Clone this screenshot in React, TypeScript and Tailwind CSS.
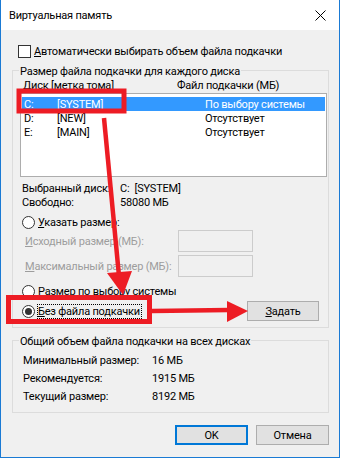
import React from 'react';

function Radio({ checked = false }: { checked?: boolean }) {
  return (
    <span className="w-[13px] h-[13px] rounded-full border border-[#333333] bg-white flex items-center justify-center shrink-0">
      {checked && <span className="w-[7px] h-[7px] rounded-full bg-[#333333]" />}
    </span>
  );
}

function Button({ children, isDefault = false, w = 'w-[72px]' }: { children: React.ReactNode; isDefault?: boolean; w?: string }) {
  return (
    <div
      className={
        'h-[20px] flex items-center justify-center bg-[#e1e1e1] ' +
        w +
        ' ' +
        (isDefault ? 'border-2 border-[#0078d7]' : 'border border-[#adadad]')
      }
    >
      {children}
    </div>
  );
}

const disks = [
  { letter: 'C:', label: '[SYSTEM]', file: 'По выбору системы', selected: true },
  { letter: 'D:', label: '[NEW]', file: 'Отсутствует', selected: false },
  { letter: 'E:', label: '[MAIN]', file: 'Отсутствует', selected: false },
];

export default function App() {
  return (
    <div className="relative w-[340px] h-[458px] overflow-hidden whitespace-nowrap [font-family:Roboto,sans-serif] text-[11px] tracking-[-0.2px] leading-[15px] text-black">
      <div className="w-full h-full flex flex-col bg-[#f0f0f0] border-x border-b border-[#1a7ad4]">
        {/* Title bar */}
        <div className="h-[30px] bg-white flex items-center justify-between pl-[8px] pr-[13px] shrink-0">
          <span>Виртуальная память</span>
          <svg width="11" height="11" viewBox="0 0 11 11">
            <path d="M0.5 0.5L10.5 10.5M10.5 0.5L0.5 10.5" stroke="#000" strokeWidth="1" />
          </svg>
        </div>

        <div className="flex flex-col pl-[11px] pr-[10px]">
          {/* Auto checkbox */}
          <div className="mt-[14px] ml-[6px] h-[15px] flex items-center gap-[3px]">
            <span className="w-[13px] h-[13px] border border-[#333333] bg-white shrink-0" />
            <span>
              <span className="underline underline-offset-1">А</span>втоматически выбирать объем файла подкачки
            </span>
          </div>

          {/* Per-disk group */}
          <div className="mt-[11px] border border-[#dcdcdc] flex flex-col pb-[6px]">
            <div className="-mt-[7px] ml-[6px] px-[1px] w-fit bg-[#f0f0f0] h-[15px]">
              Размер файла подкачки для каждого диска
            </div>
            <div className="ml-[10px] h-[14px] leading-[14px] flex">
              <span className="w-[154px] shrink-0">Диск [метка тома]</span>
              <span>Файл подкачки (МБ)</span>
            </div>
            <div className="ml-[7px] w-[307px] h-[84px] bg-white border border-[#adadad] pt-[3px] px-[1px]">
              {disks.map((d) => (
                <div
                  key={d.letter}
                  className={
                    'h-[14px] flex items-center pl-[2px] ' + (d.selected ? 'bg-[#3399ff] text-white' : '')
                  }
                >
                  <span className="w-[33px] shrink-0">{d.letter}</span>
                  <span className="w-[148px] shrink-0">{d.label}</span>
                  <span>{d.file}</span>
                </div>
              ))}
            </div>

            <div className="ml-[9px] mt-[4px] h-[14px] flex items-center">
              <span className="w-[98px] shrink-0">Выбранный диск:</span>
              <span>C:&nbsp;&nbsp;[SYSTEM]</span>
            </div>
            <div className="ml-[9px] h-[14px] flex items-center">
              <span className="w-[98px] shrink-0">Свободно:</span>
              <span>58080 МБ</span>
            </div>

            <div className="ml-[9px] mt-[6px] h-[14px] flex items-center gap-[3px]">
              <Radio />
              <span>
                <span className="underline underline-offset-1">У</span>казать размер:
              </span>
            </div>
            <div className="ml-[12px] mt-[1px] h-[22px] flex items-center">
              <span className="w-[153px] shrink-0 text-[#9d9d9d]">
                <span className="underline underline-offset-1">И</span>сходный размер (МБ):
              </span>
              <span className="w-[75px] h-[22px] border border-[#cccccc]" />
            </div>
            <div className="ml-[12px] mt-[3px] h-[22px] flex items-center">
              <span className="w-[153px] shrink-0 text-[#9d9d9d]">
                <span className="underline underline-offset-1">М</span>аксимальный размер (МБ):
              </span>
              <span className="w-[75px] h-[22px] border border-[#cccccc]" />
            </div>

            <div className="ml-[9px] mt-[7px] h-[14px] flex items-center gap-[3px]">
              <Radio />
              <span>Размер по выбору системы</span>
            </div>
            <div className="ml-[9px] mt-[3px] pr-[9px] h-[20px] flex items-center justify-between">
              <div className="flex items-center gap-[2px]">
                <Radio checked />
                <span className="border border-dotted border-black leading-[13px] pr-[1px]">
                  <span className="underline underline-offset-1">Б</span>ез файла подкачки
                </span>
              </div>
              <Button>
                <span>
                  <span className="underline underline-offset-1">З</span>адать
                </span>
              </Button>
            </div>
          </div>

          {/* Totals group */}
          <div className="mt-[12px] border border-[#dcdcdc] flex flex-col pb-[7px]">
            <div className="-mt-[7px] ml-[6px] px-[1px] w-fit bg-[#f0f0f0] h-[15px]">
              Общий объем файла подкачки на всех дисках
            </div>
            <div className="mt-[2px] ml-[10px] flex flex-col">
              {[
                ['Минимальный размер:', '16 МБ'],
                ['Рекомендуется:', '1915 МБ'],
                ['Текущий размер:', '8192 МБ'],
              ].map(([k, v]) => (
                <div key={k} className="h-[18px] flex items-center">
                  <span className="w-[129px] shrink-0">{k}</span>
                  <span>{v}</span>
                </div>
              ))}
            </div>
          </div>

          {/* Dialog buttons */}
          <div className="mt-[12px] flex justify-end gap-[8px]">
            <Button isDefault w="w-[73px]">OK</Button>
            <Button w="w-[73px]">Отмена</Button>
          </div>
        </div>
      </div>

      {/* Red annotations drawn over the dialog */}
      <svg className="absolute inset-0 pointer-events-none" width="340" height="458" viewBox="0 0 340 458">
        <rect x="19" y="91" width="105" height="20" fill="none" stroke="#ed1c24" strokeWidth="5" />
        <line x1="104" y1="118" x2="119" y2="276" stroke="#ed1c24" strokeWidth="4.5" />
        <polygon points="107,273 132,271 123,295" fill="#ed1c24" />
        <rect x="8.5" y="297.5" width="141" height="24" fill="none" stroke="#ed1c24" strokeWidth="5" />
        <line x1="152" y1="311" x2="229" y2="310" stroke="#ed1c24" strokeWidth="4.5" />
        <polygon points="227,301 227,322 248,311" fill="#ed1c24" />
      </svg>
    </div>
  );
}
